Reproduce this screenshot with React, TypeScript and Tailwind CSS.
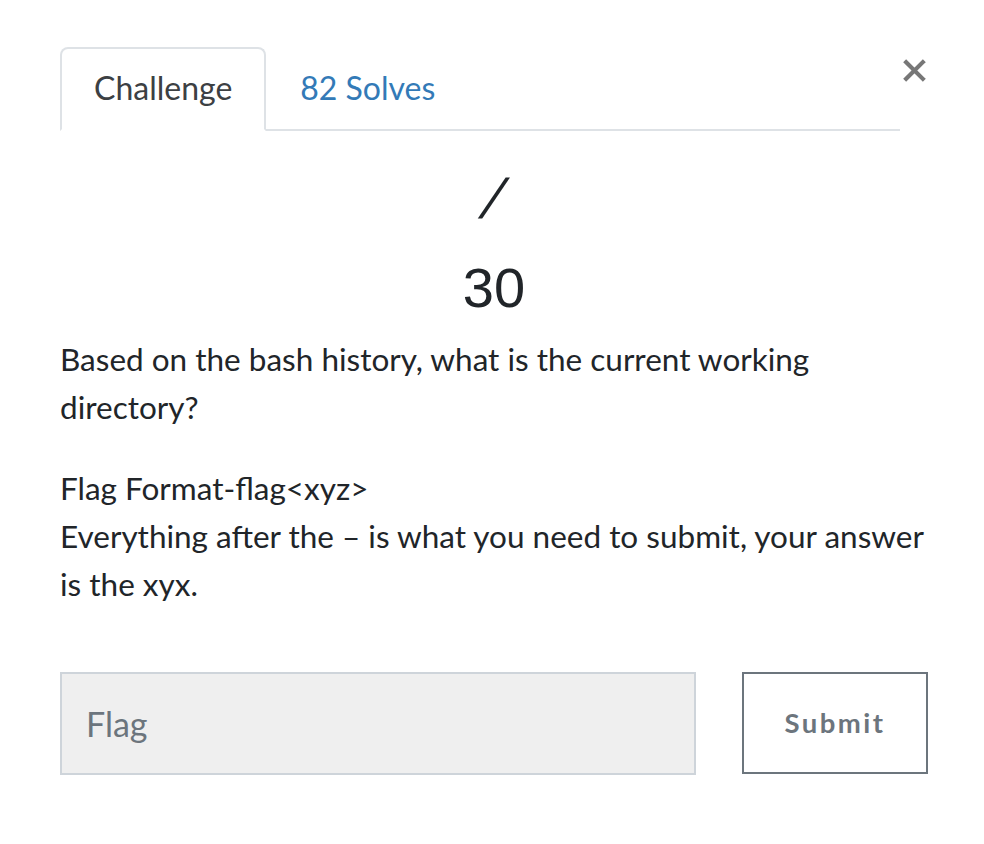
const App = () => {
  return (
    <div className="min-h-screen w-[984px] bg-white" style={{ fontFamily: "Lato, 'Noto Sans', sans-serif" }}>
      <div className="pl-[60px] pr-[56px] pt-[47px]">
        <div className="flex items-start">
          <nav className="flex flex-1 border-b-2 border-[#dee2e6]">
            <div className="-mb-[2px] rounded-t-[8px] border-2 border-[#dee2e6] border-b-white bg-white px-[32px] py-[15px] text-[32px] leading-[48px] text-[#3c4043]">
              Challenge
            </div>
            <div className="px-[34px] py-[17px] text-[32px] leading-[48px] text-[#337ab7]">
              82 Solves
            </div>
          </nav>
          <button className="mt-[3px] flex h-[40px] w-[28px] items-center justify-center text-[#777777]">
            <svg width="23" height="23" viewBox="0 0 22 22">
              <path d="M3 3 L19 19 M19 3 L3 19" stroke="#777777" strokeWidth="4" strokeLinecap="square" />
            </svg>
          </button>
        </div>

        <div className="mt-[34px] flex flex-col items-center text-[56px] leading-[67px] text-[#212529]" style={{ fontFamily: "'Liberation Sans', Arial, sans-serif" }}>
          <div className="inline-block -skew-x-[22deg] font-light">/</div>
          <div className="mt-[22px]">30</div>
        </div>

        <div className="mt-[14px] text-[31.5px] leading-[48px] text-[#212529]">
          <p className="mb-[33px]">Based on the bash history, what is the current working directory?</p>
          <p>
            Flag Format-flag&lt;xyz&gt;
            <br />
            Everything after the – is what you need to submit, your answer is the xyx.
          </p>
        </div>

        <div className="mt-[64px] flex items-stretch">
          <div className="flex h-[103px] w-[636px] items-center border-2 border-[#ced4da] bg-[#efefef] pl-[24px] text-[34px] text-[#6c757d]">
            Flag
          </div>
          <button className="ml-[46px] flex h-[102px] w-[186px] items-center justify-center border-2 border-[#6c757d] bg-white text-[27.5px] font-bold tracking-[2.5px] text-[#6c757d]">
            Submit
          </button>
        </div>
      </div>
    </div>
  );
};

export default App;
